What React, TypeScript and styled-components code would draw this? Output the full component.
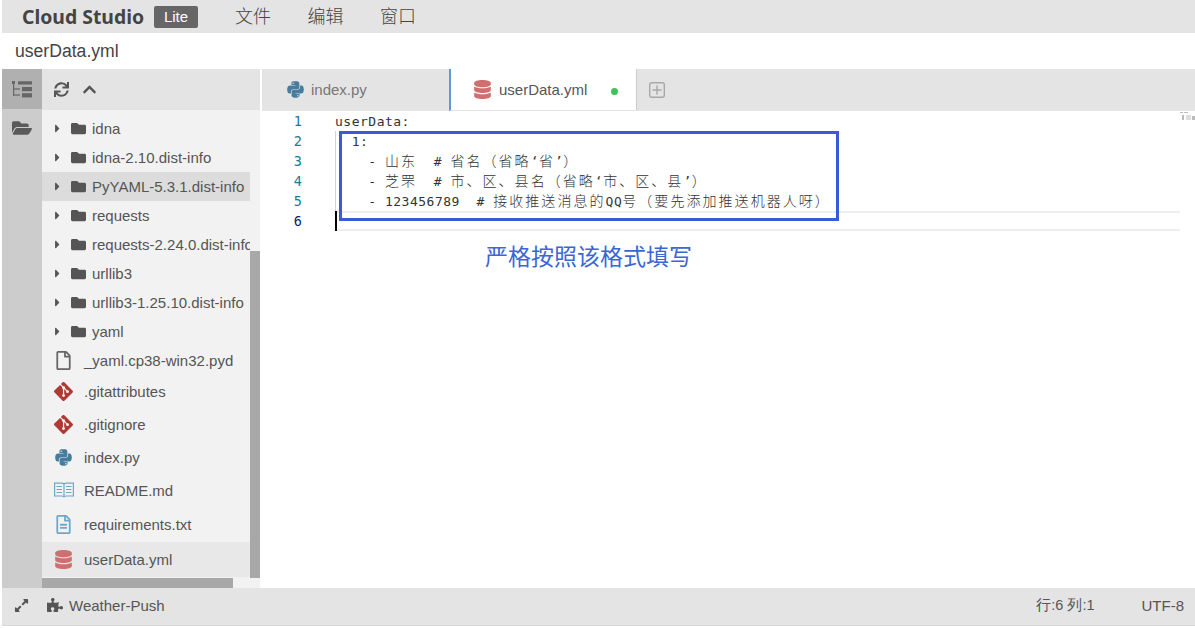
import styled, { createGlobalStyle } from "styled-components";
import {
  FaCaretRight,
  FaChevronUp,
  FaDatabase,
  FaExpandAlt,
  FaFolder,
  FaFolderOpen,
  FaPuzzlePiece,
  FaPython,
  FaRegFile,
  FaRegFileAlt,
  FaSync,
} from "react-icons/fa";
import { SiGit } from "react-icons/si";

const GlobalStyle = createGlobalStyle`
  html, body {
    margin: 0;
    padding: 0;
    background: #fff;
  }
  body {
    font-family: "Liberation Sans", Arial, sans-serif;
    overflow: hidden;
  }
`;

const Page = styled.div`
  display: flex;
  flex-direction: column;
  box-sizing: border-box;
  width: 1195px;
  height: 628px;
  padding: 0 0 2px 2px;
  overflow: hidden;
`;

const TopBar = styled.div`
  display: flex;
  align-items: center;
  flex: none;
  height: 33px;
  padding-left: 20px;
  background: #e4e4e4;
`;

const Logo = styled.div`
  width: 132px;
  font-family: "Noto Sans", sans-serif;
  font-size: 19.4px;
  font-weight: 700;
  color: #444;
  white-space: nowrap;
`;

const Badge = styled.div`
  display: flex;
  align-items: center;
  justify-content: center;
  width: 44px;
  height: 22px;
  border-radius: 2px;
  background: #666;
  color: #fff;
  font-size: 15px;
`;

const Menu = styled.div`
  display: flex;
  gap: 36.5px;
  margin-left: 37px;
  padding-bottom: 4px;
  font-family: "Noto Sans CJK SC", sans-serif;
  font-size: 18px;
  font-weight: 300;
  color: #444;
`;

const TitleBar = styled.div`
  display: flex;
  align-items: center;
  flex: none;
  height: 36px;
  padding-left: 13px;
  font-size: 17.6px;
  color: #444;
`;

const Workspace = styled.div`
  display: flex;
  flex: 1;
  min-height: 0;
`;

const Rail = styled.div`
  flex: none;
  width: 40px;
  background: #ccc;
`;

const RailButton = styled.div<{ $active?: boolean }>`
  display: flex;
  align-items: center;
  justify-content: center;
  height: ${(p) => (p.$active ? "40px" : "38px")};
  background: ${(p) => (p.$active ? "#b0b0b0" : "transparent")};
  color: #5a5a5a;
  font-size: 20px;
`;

const Sidebar = styled.div`
  position: relative;
  display: flex;
  flex-direction: column;
  flex: none;
  width: 218px;
  background: #f2f2f2;
`;

const SidebarHead = styled.div`
  display: flex;
  align-items: center;
  gap: 13px;
  flex: none;
  height: 41px;
  padding-left: 12px;
  margin-bottom: 1px;
  background: #e4e4e4;
  color: #555;
  font-size: 15px;
`;

const Tree = styled.div`
  padding-top: 3px;
  width: 208px;
  overflow: hidden;
`;

const Row = styled.div<{ $h?: number; $bg?: string }>`
  display: flex;
  align-items: center;
  height: ${(p) => p.$h ?? 29}px;
  padding-left: 9px;
  background: ${(p) => p.$bg ?? "transparent"};
  color: #555;
  font-size: 15px;
  white-space: nowrap;
`;

const Caret = styled.span`
  display: flex;
  flex: none;
  width: 20px;
  color: #555;
  font-size: 13px;
`;

const FolderGlyph = styled.span`
  display: flex;
  flex: none;
  width: 21px;
  color: #555;
  font-size: 15px;
`;

const FileGlyph = styled.span<{ $color: string }>`
  display: flex;
  align-items: center;
  box-sizing: border-box;
  width: 33px;
  padding-left: 3px;
  flex: none;
  color: ${(p) => p.$color};
  font-size: 19px;
`;

const VScroll = styled.div`
  position: absolute;
  right: 0;
  top: 182px;
  width: 10px;
  height: 327px;
  background: #a8a8a8;
`;

const HScroll = styled.div`
  position: absolute;
  left: 0;
  bottom: 0;
  width: 191px;
  height: 10px;
  background: #a8a8a8;
`;

const Main = styled.div`
  display: flex;
  flex-direction: column;
  flex: 1;
  min-width: 0;
  margin-left: 2px;
`;

const TabBar = styled.div`
  display: flex;
  align-items: center;
  flex: none;
  height: 42px;
  background: #e4e4e4;
`;

const Tab = styled.div<{ $active?: boolean }>`
  display: flex;
  align-items: center;
  box-sizing: border-box;
  width: ${(p) => (p.$active ? "188px" : "187px")};
  height: 100%;
  padding-left: ${(p) => (p.$active ? "22px" : "24px")};
  background: ${(p) => (p.$active ? "#fff" : "transparent")};
  border-left: ${(p) => (p.$active ? "2px solid #5b9bdc" : "0")};
  border-right: ${(p) => (p.$active ? "1px solid #ccc" : "0")};
  border-bottom: 1px solid #e4e4e4;
  color: ${(p) => (p.$active ? "#555" : "#777")};
  font-size: 15px;
`;

const TabIcon = styled.span<{ $color: string; $w: number }>`
  display: flex;
  width: ${(p) => p.$w}px;
  flex: none;
  color: ${(p) => p.$color};
  font-size: 19px;
`;

const Dot = styled.span`
  width: 7px;
  height: 7px;
  margin-left: 24px;
  margin-top: 3px;
  border-radius: 50%;
  background: #3cc35a;
`;

const AddTab = styled.svg`
  margin-left: 12px;
`;

const Editor = styled.div`
  position: relative;
  flex: 1;
  display: flex;
  min-height: 0;
  background: #fff;
`;

const Gutter = styled.div`
  flex: none;
  width: 40px;
  margin-right: 33px;
  text-align: right;
  font-family: "DejaVu Sans Mono", monospace;
  font-size: 13.5px;
  line-height: 20px;
`;

const LineNo = styled.div<{ $current?: boolean }>`
  height: 20px;
  color: ${(p) => (p.$current ? "#0b216f" : "#237893")};
`;

const Code = styled.div`
  flex: none;
  width: 845px;
  font-family: "DejaVu Sans Mono", monospace;
  font-size: 13px;
  letter-spacing: 0.5px;
  line-height: 20px;
  color: #333;
`;

const CodeLine = styled.div<{ $guide?: boolean }>`
  box-sizing: border-box;
  height: 20px;
  padding-top: 1px;
  white-space: pre;
  box-shadow: ${(p) => (p.$guide ? "inset 1px 0 #d3d3d3" : "none")};
`;

const CurrentLine = styled.div`
  position: relative;
  box-sizing: border-box;
  height: 20px;
  border-top: 2px solid #eee;
  border-bottom: 2px solid #eee;
`;

const Cjk = styled.span`
  font-family: "Noto Sans CJK SC", sans-serif;
  font-size: 14px;
  font-weight: 300;
  letter-spacing: 2.05px;
  line-height: 1;
`;

const Cursor = styled.span`
  position: absolute;
  left: 0;
  top: -2px;
  width: 2px;
  height: 20px;
  background: #000;
`;

const Minimap = styled.svg`
  position: absolute;
  top: 1px;
  right: 0;
`;

const NoteBox = styled.div`
  position: absolute;
  left: 77px;
  top: 20px;
  box-sizing: border-box;
  width: 500px;
  height: 90px;
  border: 3px solid #3b5bd6;
`;

const NoteText = styled.div`
  position: absolute;
  left: 223px;
  top: 127px;
  font-family: "Noto Sans CJK SC", sans-serif;
  font-size: 23px;
  line-height: 34px;
  color: #3b66d6;
`;

const StatusBar = styled.div`
  display: flex;
  align-items: center;
  flex: none;
  box-sizing: border-box;
  height: 38px;
  padding: 0 11px 3px 12px;
  background: #e4e4e4;
  border-bottom: 1px solid #d8d8d8;
  color: #555;
  font-size: 15px;
`;

const StatusIcon = styled.span<{ $gap: number; $size: number }>`
  display: flex;
  margin-right: ${(p) => p.$gap}px;
  color: #555;
  font-size: ${(p) => p.$size}px;
`;

const Spacer = styled.div`
  flex: 1;
`;

const Position = styled.span`
  font-size: 14.5px;
`;

const Encoding = styled.span`
  margin-left: 47px;
`;

const folders = [
  "idna",
  "idna-2.10.dist-info",
  "PyYAML-5.3.1.dist-info",
  "requests",
  "requests-2.24.0.dist-info",
  "urllib3",
  "urllib3-1.25.10.dist-info",
  "yaml",
];

function TreeIcon() {
  return (
    <svg width="20" height="17" viewBox="0 0 20 17" fill="#666">
      <rect x="0" y="0" width="3" height="3" />
      <rect x="6" y="0.3" width="14" height="3.2" />
      <rect x="1" y="2" width="1.2" height="12.6" />
      <rect x="1" y="7.4" width="7" height="1.2" />
      <rect x="1" y="13.4" width="7" height="1.2" />
      <rect x="10" y="6" width="10" height="4.2" />
      <rect x="10" y="12.2" width="10" height="4.2" />
    </svg>
  );
}

function BookIcon() {
  return (
    <svg width="20" height="16" viewBox="0 0 20 16" fill="none" stroke="#6fa8c7" strokeWidth="1.2">
      <path d="M.6 1.2h7.2c1.2 0 2.2.6 2.2 1.6v12.4c0-.8-1-1.2-2.2-1.2H.6zM19.4 1.2h-7.2c-1.2 0-2.2.6-2.2 1.6v12.4c0-.8 1-1.2 2.2-1.2h7.2z" />
      <path d="M2.5 4.5h5.5M2.5 7.5h5.5M2.5 10.5h5.5M12 4.5h5.5M12 7.5h5.5M12 10.5h5.5" />
    </svg>
  );
}

export default function App() {
  return (
    <>
      <GlobalStyle />
      <Page>
        <TopBar>
          <Logo>Cloud Studio</Logo>
          <Badge>Lite</Badge>
          <Menu>
            <span>文件</span>
            <span>编辑</span>
            <span>窗口</span>
          </Menu>
        </TopBar>
        <TitleBar>userData.yml</TitleBar>
        <Workspace>
          <Rail>
            <RailButton $active>
              <TreeIcon />
            </RailButton>
            <RailButton>
              <FaFolderOpen />
            </RailButton>
          </Rail>
          <Sidebar>
            <SidebarHead>
              <FaSync />
              <FaChevronUp />
            </SidebarHead>
            <Tree>
              {folders.map((name) => (
                <Row key={name} $bg={name.startsWith("PyYAML") ? "#dcdcdc" : undefined}>
                  <Caret>
                    <FaCaretRight />
                  </Caret>
                  <FolderGlyph>
                    <FaFolder />
                  </FolderGlyph>
                  {name}
                </Row>
              ))}
              <Row $h={29}>
                <FileGlyph $color="#666">
                  <FaRegFile />
                </FileGlyph>
                _yaml.cp38-win32.pyd
              </Row>
              <Row $h={32}>
                <FileGlyph $color="#b03a33">
                  <SiGit />
                </FileGlyph>
                .gitattributes
              </Row>
              <Row $h={34}>
                <FileGlyph $color="#b03a33">
                  <SiGit />
                </FileGlyph>
                .gitignore
              </Row>
              <Row $h={32}>
                <FileGlyph $color="#467c9e">
                  <FaPython />
                </FileGlyph>
                index.py
              </Row>
              <Row $h={34}>
                <FileGlyph $color="#6fa8c7">
                  <BookIcon />
                </FileGlyph>
                README.md
              </Row>
              <Row $h={35}>
                <FileGlyph $color="#6fa8c7">
                  <FaRegFileAlt />
                </FileGlyph>
                requirements.txt
              </Row>
              <Row $h={35} $bg="#e8e8e8">
                <FileGlyph $color="#cf6f6f">
                  <FaDatabase />
                </FileGlyph>
                userData.yml
              </Row>
            </Tree>
            <VScroll />
            <HScroll />
          </Sidebar>
          <Main>
            <TabBar>
              <Tab>
                <TabIcon $color="#467c9e" $w={25}>
                  <FaPython />
                </TabIcon>
                index.py
              </Tab>
              <Tab $active>
                <TabIcon $color="#cf6f6f" $w={26}>
                  <FaDatabase />
                </TabIcon>
                userData.yml
                <Dot />
              </Tab>
              <AddTab width="16" height="16" viewBox="0 0 16 16" fill="none" stroke="#a8a8a8" strokeWidth="1.4">
                <rect x=".7" y=".7" width="14.6" height="14.6" rx="2" />
                <path d="M8 3.5v9M3.5 8h9" />
              </AddTab>
            </TabBar>
            <Editor>
              <Gutter>
                {[1, 2, 3, 4, 5, 6].map((n) => (
                  <LineNo key={n} $current={n === 6}>
                    {n}
                  </LineNo>
                ))}
              </Gutter>
              <Code>
                <CodeLine>userData:</CodeLine>
                <CodeLine $guide>{"  1:"}</CodeLine>
                <CodeLine $guide>
                  {"    - "}
                  <Cjk>山东</Cjk>
                  {"  # "}
                  <Cjk>省名（省略</Cjk>
                  {"‘"}
                  <Cjk>省</Cjk>
                  {"’"}
                  <Cjk>）</Cjk>
                </CodeLine>
                <CodeLine $guide>
                  {"    - "}
                  <Cjk>芝罘</Cjk>
                  {"  # "}
                  <Cjk>市、区、县名（省略</Cjk>
                  {"‘"}
                  <Cjk>市、区、县</Cjk>
                  {"’"}
                  <Cjk>）</Cjk>
                </CodeLine>
                <CodeLine $guide>
                  {"    - 123456789  # "}
                  <Cjk>接收推送消息的</Cjk>
                  QQ
                  <Cjk>号（要先添加推送机器人呀）</Cjk>
                </CodeLine>
                <CurrentLine>
                  <Cursor />
                </CurrentLine>
              </Code>
              <Minimap width="15" height="9" viewBox="0 0 15 9" fill="#bbb">
                <rect x="0" y="0" width="3" height="1" />
                <rect x="4" y="0" width="4" height="1" />
                <rect x="2" y="3" width="2" height="5" />
                <rect x="6" y="3" width="5" height="5" fill="#ddd" />
                <rect x="12" y="4" width="3" height="4" />
              </Minimap>
              <NoteBox />
              <NoteText>严格按照该格式填写</NoteText>
            </Editor>
          </Main>
        </Workspace>
        <StatusBar>
          <StatusIcon $gap={18} $size={15}>
            <FaExpandAlt />
          </StatusIcon>
          <StatusIcon $gap={6} $size={16}>
            <FaPuzzlePiece />
          </StatusIcon>
          Weather-Push
          <Spacer />
          <Position>行:6 列:1</Position>
          <Encoding>UTF-8</Encoding>
        </StatusBar>
      </Page>
    </>
  );
}
